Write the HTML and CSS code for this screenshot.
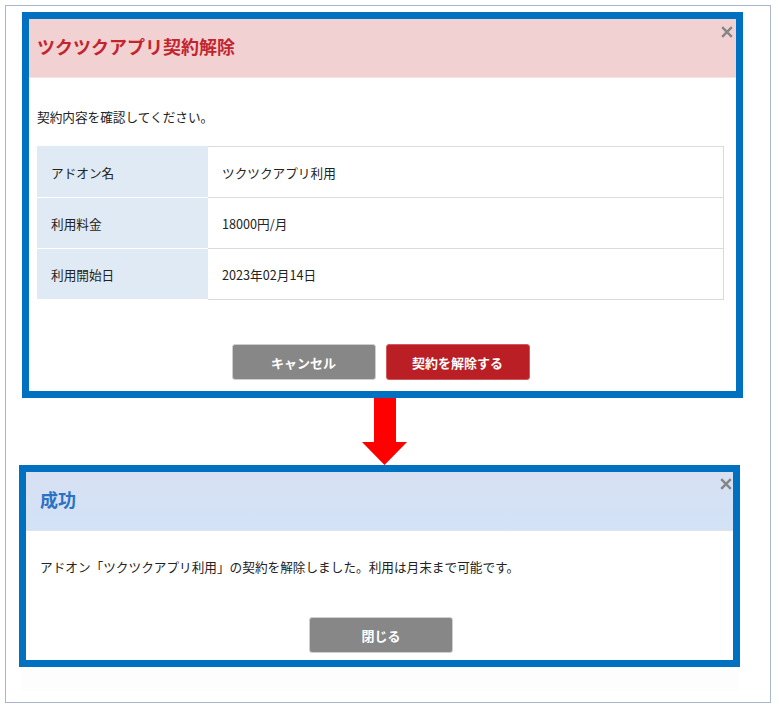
FILE: index.html
```html
<!DOCTYPE html>
<html lang="ja">
<head>
<meta charset="utf-8">
<title>契約解除</title>
<link rel="stylesheet" href="styles.css">
</head>
<body>
<div class="page">
  <div class="frame">
    <section class="modal modal-confirm">
      <header class="modal-head head-danger">
        <h1 class="modal-title title-danger">ツクツクアプリ契約解除</h1>
        <span class="close close-top" aria-label="閉じる">
          <svg width="12" height="12" viewBox="0 0 12 12"><path d="M1.2 1.2 L10.8 10.8 M10.8 1.2 L1.2 10.8" stroke="#858585" stroke-width="2.4" stroke-linecap="butt"/></svg>
        </span>
      </header>
      <div class="modal-body body-confirm">
        <p class="lead">契約内容を確認してください。</p>
        <table class="info">
          <tr><th>アドオン名</th><td>ツクツクアプリ利用</td></tr>
          <tr><th>利用料金</th><td>18000円/月</td></tr>
          <tr><th>利用開始日</th><td>2023年02月14日</td></tr>
        </table>
        <div class="actions actions-confirm">
          <button class="btn btn-gray">キャンセル</button>
          <button class="btn btn-red">契約を解除する</button>
        </div>
      </div>
    </section>

    <div class="arrow-row">
      <svg width="45" height="67" viewBox="0 0 45 67"><polygon points="12,0 34,0 34,44 45,44 22.5,67 0,44 12,44" fill="#ff0000"/></svg>
    </div>

    <section class="modal modal-success">
      <header class="modal-head head-success">
        <h1 class="modal-title title-success">成功</h1>
        <span class="close close-bottom" aria-label="閉じる">
          <svg width="12" height="12" viewBox="0 0 12 12"><path d="M1.2 1.2 L10.8 10.8 M10.8 1.2 L1.2 10.8" stroke="#858585" stroke-width="2.4" stroke-linecap="butt"/></svg>
        </span>
      </header>
      <div class="modal-body body-success">
        <p class="lead">アドオン「ツクツクアプリ利用」の契約を解除しました。利用は月末まで可能です。</p>
        <div class="actions actions-success">
          <button class="btn btn-gray">閉じる</button>
        </div>
      </div>
    </section>
    <div class="shade"></div>
  </div>
</div>
</body>
</html>
```

FILE: styles.css
```css
* { box-sizing: border-box; }

body {
  margin: 0;
  background: #ffffff;
  font-family: "Noto Sans CJK JP", "Noto Sans", sans-serif;
  color: #222;
}

.page {
  padding: 5px;
}

.frame {
  width: 766px;
  height: 698px;
  border: 1px solid #aab6cc;
  padding: 6px 0 0 16px;
}

.modal {
  position: relative;
  width: 721px;
  border: 7px solid #0070c0;
  background: #fff;
}

.modal-head {
  position: relative;
  height: 59px;
  display: flex;
  align-items: center;
  padding-bottom: 5px;
}

.head-danger {
  background: #f2d1d3;
  border-bottom: 1px solid #f8e3e3;
  padding-left: 8px;
}

.head-success {
  background: linear-gradient(#d7e0f2, #d3e2f6);
  border-bottom: 1px solid #e3e4ea;
  padding-left: 14px;
}

.modal-title {
  margin: 0;
  font-size: 18px;
  font-weight: 700;
  line-height: 24px;
}

.title-danger { color: #c2252d; }
.title-success { color: #2b71c4; }

.close {
  position: absolute;
  display: block;
  width: 12px;
  height: 12px;
  line-height: 0;
}

.close-top { right: 3px; top: 7px; }
.close-bottom { right: 1px; top: 6px; }

.modal-body p.lead {
  margin: 0;
  font-size: 12.65px;
  line-height: 20px;
  color: #222;
}

.body-confirm {
  padding: 29px 12px 11px 8px;
}

.body-success {
  padding: 26px 11px 7px 14px;
}

.info {
  width: 100%;
  margin-top: 19px;
  border-collapse: separate;
  border-spacing: 0;
  font-size: 12.65px;
}

.info th,
.info td {
  height: 51px;
  text-align: left;
  font-weight: 400;
  color: #222;
  padding: 0 14px;
  vertical-align: middle;
}

.info th {
  width: 171px;
  background: #dfeaf4;
  border-top: 1px solid #ffffff;
}

.info td {
  border-top: 1px solid #dadada;
  border-right: 1px solid #dadada;
}

.info tr:first-child th { border-top-color: #dfeaf4; }
.info tr:last-child td { border-bottom: 1px solid #dadada; height: 52px; }
.info tr:last-child th { border-bottom: 1px solid #ffffff; height: 52px; }

.actions {
  display: flex;
  justify-content: center;
  gap: 10px;
}

.actions-confirm { margin-top: 44px; }
.actions-success { margin-top: 40px; }

.btn {
  width: 144px;
  height: 36px;
  border-radius: 3px;
  font-family: "Noto Sans CJK JP", "Noto Sans", sans-serif;
  font-size: 13px;
  font-weight: 700;
  color: #fff;
  padding: 0;
  cursor: pointer;
}

.btn-gray {
  background: #878787;
  border: 1px solid #cfcfcf;
}

.btn-red {
  background: #b91f24;
  border: 1px solid #d4585c;
}

.arrow-row {
  height: 67px;
  padding-left: 340px;
  line-height: 0;
}

.modal-success {
  margin-left: -3px;
}

.shade {
  margin-left: 0;
  width: 716px;
  height: 24px;
  background: #fdfdfd;
}
```
